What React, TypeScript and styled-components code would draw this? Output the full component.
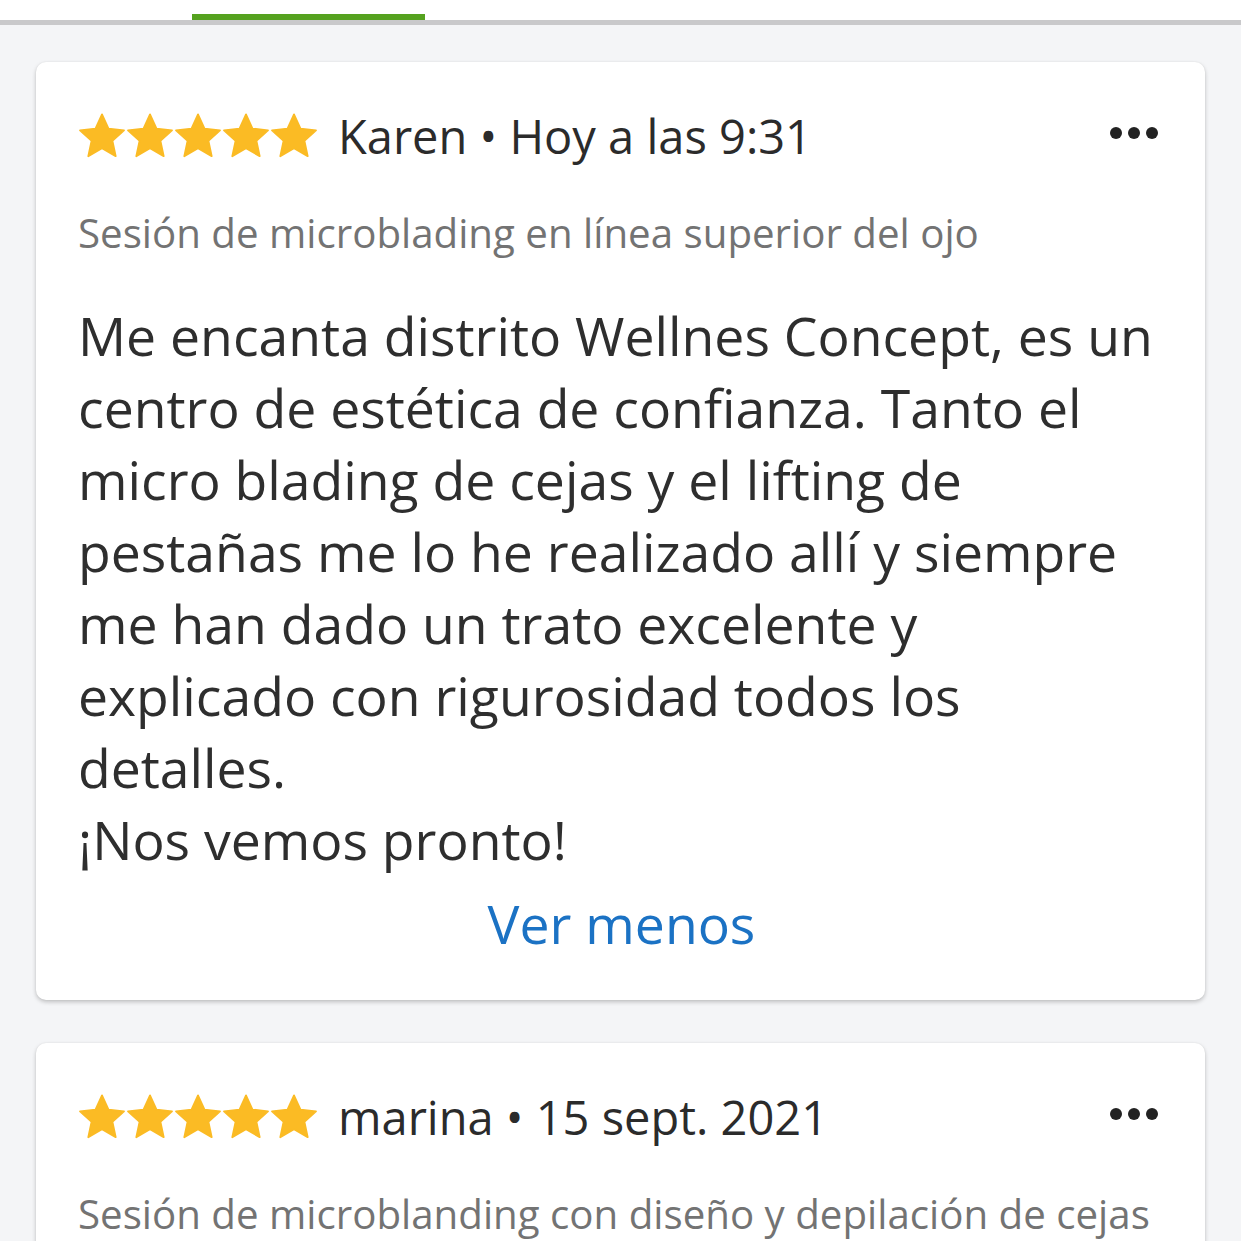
import React from "react";
import styled, { createGlobalStyle } from "styled-components";

const Global = createGlobalStyle`
  html, body { margin: 0; padding: 0; background: #f4f5f7; }
  body { font-family: "Open Sans", "Noto Sans", sans-serif; }
`;

const Page = styled.div`
  width: 1241px;
  height: 1241px;
  overflow: hidden;
  background: #f4f5f7;
`;

const TabBar = styled.div`
  height: 20px;
  background: #ffffff;
  border-bottom: 5px solid #c9c9cb;
  display: flex;
  align-items: flex-end;
  padding-left: 192px;
`;

const TabIndicator = styled.div`
  width: 233px;
  height: 6px;
  background: #55a21f;
`;

const List = styled.div`
  display: flex;
  flex-direction: column;
  gap: 43px;
  padding: 37px 36px 0 36px;
`;

const Card = styled.div`
  background: #ffffff;
  border-radius: 10px;
  box-shadow: 0 2px 4px rgba(0, 0, 0, 0.22), 0 0 2px rgba(0, 0, 0, 0.06);
  padding: 46px 40px 40px 42px;
`;

const Header = styled.div`
  display: flex;
  align-items: center;
  height: 56px;
`;

const Stars = styled.div`
  display: flex;
  margin-right: 20px;
`;

const Meta = styled.div`
  flex: 1;
  font-size: 47px;
  color: #2b2b2b;
  white-space: nowrap;
`;

const Dots = styled.div`
  display: flex;
  gap: 6px;
  margin-right: 7px;
  margin-bottom: 6px;
`;

const Dot = styled.span`
  width: 12px;
  height: 12px;
  border-radius: 50%;
  background: #222;
`;

const Service = styled.div`
  margin-top: 41px;
  font-size: 40.25px;
  color: #737373;
  white-space: nowrap;
`;

const Body = styled.div`
  margin-top: 40px;
  font-size: 53.5px;
  line-height: 72px;
  color: #2e2e2e;
`;

const More = styled.div`
  margin-top: 12px;
  text-align: center;
  font-size: 53.5px;
  line-height: 72px;
  color: #1b72c4;
`;

const Star = () => (
  <svg width="48" height="48" viewBox="0 0 24 24">
    <path
      d="M12 1.2l3.25 7.1 7.75 0.85-5.8 5.25 1.65 7.7L12 18.1l-6.85 4 1.65-7.7L1 9.15l7.75-0.85z"
      fill="#fbbb24"
      stroke="#fbbb24"
      strokeWidth="0.9"
      strokeLinejoin="round"
    />
  </svg>
);

const Rating = () => (
  <Stars>
    {[0, 1, 2, 3, 4].map((i) => (
      <Star key={i} />
    ))}
  </Stars>
);

const More3 = () => (
  <Dots>
    <Dot />
    <Dot />
    <Dot />
  </Dots>
);

export default function App() {
  return (
    <Page>
      <Global />
      <TabBar>
        <TabIndicator />
      </TabBar>
      <List>
        <Card>
          <Header>
            <Rating />
            <Meta>Karen • Hoy a las 9:31</Meta>
            <More3 />
          </Header>
          <Service>Sesión de microblading en línea superior del ojo</Service>
          <Body>
            Me encanta distrito Wellnes Concept, es un centro de estética de
            confianza. Tanto el micro blading de cejas y el lifting de pestañas
            me lo he realizado allí y siempre me han dado un trato excelente y
            explicado con rigurosidad todos los detalles.
            <br />
            ¡Nos vemos pronto!
          </Body>
          <More>Ver menos</More>
        </Card>
        <Card>
          <Header>
            <Rating />
            <Meta>marina • 15 sept. 2021</Meta>
            <More3 />
          </Header>
          <Service>Sesión de microblanding con diseño y depilación de cejas</Service>
        </Card>
      </List>
    </Page>
  );
}
